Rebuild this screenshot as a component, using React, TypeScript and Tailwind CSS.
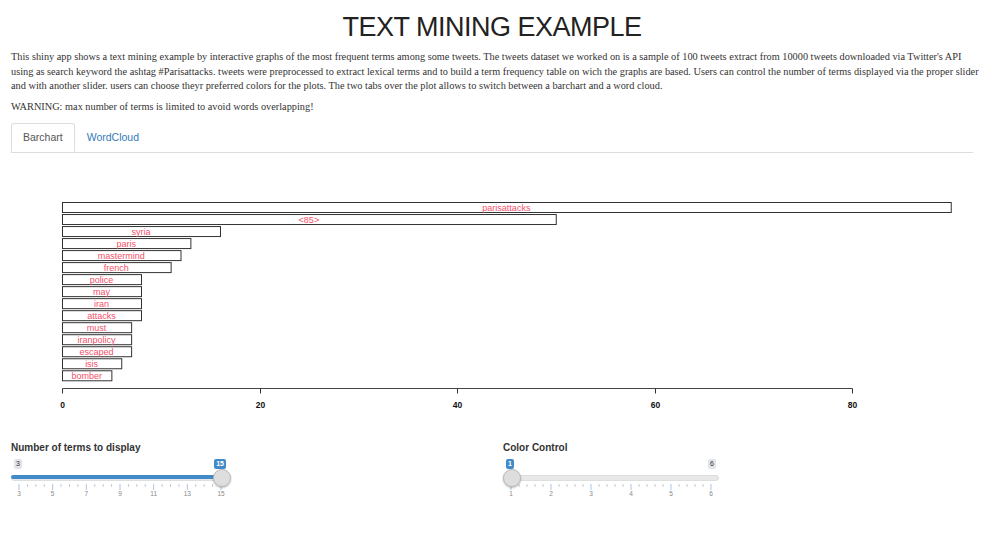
import React from 'react';

const terms: { label: string; freq: number }[] = [
  { label: 'parisattacks', freq: 90 },
  { label: '<85>', freq: 50 },
  { label: 'syria', freq: 16 },
  { label: 'paris', freq: 13 },
  { label: 'mastermind', freq: 12 },
  { label: 'french', freq: 11 },
  { label: 'police', freq: 8 },
  { label: 'may', freq: 8 },
  { label: 'iran', freq: 8 },
  { label: 'attacks', freq: 8 },
  { label: 'must', freq: 7 },
  { label: 'iranpolicy', freq: 7 },
  { label: 'escaped', freq: 7 },
  { label: 'isis', freq: 6 },
  { label: 'bomber', freq: 5 },
];

const X0 = 62;
const UNIT = 9.875;
const TOP = 49;

function BarChart() {
  return (
    <svg width="984" height="270" className="block">
      {terms.map((t, i) => {
        const y = TOP + i * 12.02;
        const w = t.freq * UNIT;
        return (
          <g key={t.label}>
            <rect x={X0 + 0.5} y={y + 0.5} width={w} height={10} fill="#fff" stroke="#333" strokeWidth="1" />
            <text
              x={X0 + w / 2}
              y={y + 9}
              textAnchor="middle"
              fontFamily="Liberation Sans, Arial, sans-serif"
              fontSize="9"
              fill="#f5506a"
            >
              {t.label}
            </text>
          </g>
        );
      })}
      <line x1={X0 + 0.5} y1={235.5} x2={852.5} y2={235.5} stroke="#444" />
      {[0, 20, 40, 60, 80].map((v) => {
        const x = Math.round(X0 + v * UNIT) + 0.5;
        return (
          <g key={v}>
            <line x1={x} y1={235.5} x2={x} y2={240.5} stroke="#333" />
            <text
              x={x}
              y={255}
              textAnchor="middle"
              fontFamily="Liberation Sans, Arial, sans-serif"
              fontSize="8.5"
              fontWeight="bold"
              fill="#111"
            >
              {v}
            </text>
          </g>
        );
      })}
    </svg>
  );
}

function Badge({ children, active }: { children: React.ReactNode; active?: boolean }) {
  return (
    <span
      className={
        active
          ? 'bg-[#428bca] text-white font-bold text-[7px] leading-[10px] px-[2px] rounded-[2px]'
          : 'bg-[#e1e4e9] text-[#333] text-[7px] leading-[10px] px-[2px] rounded-[2px]'
      }
    >
      {children}
    </span>
  );
}

function Slider({
  title,
  min,
  max,
  value,
  width,
  majors,
  minorPer,
}: {
  title: string;
  min: number;
  max: number;
  value: number;
  width: number;
  majors: number[];
  minorPer: number;
}) {
  const pad = 8;
  const inner = width - pad * 2;
  const pos = (v: number) => pad + ((v - min) / (max - min)) * inner;
  const handle = pos(value);
  const atMax = value === max;
  const minor: number[] = [];
  for (let i = 0; i < majors.length - 1; i++) {
    const a = pos(majors[i]);
    const b = pos(majors[i + 1]);
    for (let k = 1; k <= minorPer; k++) minor.push(a + ((b - a) * k) / (minorPer + 1));
  }
  return (
    <div className="flex flex-col" style={{ width }}>
      <div className="text-[10px] font-bold text-[#333] leading-none">{title}</div>
      <div className="flex justify-between items-center mt-[6px] px-[3px]">
        {atMax ? <Badge>{min}</Badge> : <Badge active>{value}</Badge>}
        {atMax ? <Badge active>{value}</Badge> : <Badge>{max}</Badge>}
      </div>
      <div className="relative h-[6px] mt-[6px] rounded-full bg-[#e8e8e8] border border-[#ddd]">
        {value !== min && (
          <div className="h-full rounded-full bg-[#428bca] -m-px" style={{ width: handle }} />
        )}
        <div
          className="absolute top-1/2 w-[18px] h-[18px] -translate-x-1/2 -translate-y-1/2 rounded-full bg-[#dedede] border border-[#bbb] shadow-[0_1px_2px_rgba(0,0,0,0.25)]"
          style={{ left: handle }}
        />
      </div>
      <svg width={width} height="14" className="block mt-[3px]">
        {minor.map((x, i) => (
          <line key={i} x1={x} y1={0} x2={x} y2={3} stroke="#c9c9c9" />
        ))}
        {majors.map((v) => (
          <g key={v}>
            <line x1={pos(v)} y1={0} x2={pos(v)} y2={6} stroke="#a9c4de" />
            <text
              x={pos(v)}
              y={12}
              textAnchor="middle"
              fontFamily="Liberation Sans, Arial, sans-serif"
              fontSize="6.5"
              fill="#888"
            >
              {v}
            </text>
          </g>
        ))}
      </svg>
    </div>
  );
}

export default function App() {
  return (
    <div className="w-[984px] h-[554px] bg-white overflow-hidden font-['Liberation_Sans',Arial,sans-serif] text-[#333]">
      <div className="px-[11px]">
        <h1 className="text-center text-[27px] tracking-[-0.5px] leading-[27px] font-normal text-[#222] pt-[14px] pb-[9px]">
          TEXT MINING EXAMPLE
        </h1>
        <p className="font-['Liberation_Serif','Times_New_Roman',serif] text-[10.3px] leading-[14.5px] text-[#333] -mr-[11px]">
          This shiny app shows a text mining example by interactive graphs of the most frequent terms among some tweets. The tweets dataset we worked on is a sample of 100 tweets extract from 10000 tweets downloaded via Twitter's API
          <br />
          using as search keyword the ashtag #Parisattacks. tweets were preprocessed to extract lexical terms and to build a term frequency table on wich the graphs are based. Users can control the number of terms displayed via the proper slider
          <br />
          and with another slider. users can choose theyr preferred colors for the plots. The two tabs over the plot allows to switch between a barchart and a word cloud.
        </p>
        <p className="font-['Liberation_Serif','Times_New_Roman',serif] text-[10.3px] leading-[14.5px] text-[#333] mt-[6px]">
          WARNING: max number of terms is limited to avoid words overlapping!
        </p>
        <div className="flex mt-[9px] border-b border-[#ddd]">
          <div className="h-[29px] px-[11px] flex items-center text-[10.5px] text-[#555] bg-white border border-[#ddd] border-b-white rounded-t-[3px] -mb-px">
            Barchart
          </div>
          <div className="h-[29px] px-[12px] flex items-center text-[10.5px] text-[#337ab7]">WordCloud</div>
        </div>
      </div>
      <BarChart />
      <div className="flex px-[11px] mt-[20px] gap-[274px]">
        <Slider
          title="Number of terms to display"
          min={3}
          max={15}
          value={15}
          width={218}
          majors={[3, 5, 7, 9, 11, 13, 15]}
          minorPer={3}
        />
        <Slider
          title="Color Control"
          min={1}
          max={6}
          value={1}
          width={216}
          majors={[1, 2, 3, 4, 5, 6]}
          minorPer={4}
        />
      </div>
    </div>
  );
}
